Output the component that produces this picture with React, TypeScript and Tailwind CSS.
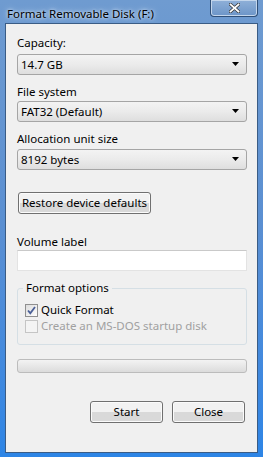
import React from "react";

const font = { fontFamily: '"Noto Sans", "Open Sans", sans-serif' };

function Combo({ value }: { value: string }) {
  return (
    <div className="flex h-[21px] w-[230px] items-center rounded-[3px] border border-[#a5a5a5] bg-gradient-to-b from-[#f3f3f3] via-[#ebebeb] to-[#dedede] pl-[3px] pr-[6px] text-[11.5px] text-black">
      <span className="leading-none">{value}</span>
      <svg className="ml-auto" width="8" height="5" viewBox="0 0 8 5">
        <path d="M0 0h7l-3.5 4z" fill="#000" />
      </svg>
    </div>
  );
}

function Button({ label, className = "" }: { label: string; className?: string }) {
  return (
    <div
      className={`flex h-[22px] items-center justify-center rounded-[3px] border border-[#707070] bg-gradient-to-b from-[#f2f2f2] from-50% to-[#d9d9d9] to-50% text-[11.5px] text-black shadow-[inset_0_0_0_1px_#fbfbfb] ${className}`}
    >
      {label}
    </div>
  );
}

function Check({ checked, disabled, label }: { checked?: boolean; disabled?: boolean; label: string }) {
  return (
    <div className="flex h-[16px] items-center">
      <div
        className={`flex h-[13px] w-[13px] items-center justify-center border ${
          disabled ? "border-[#c5c5c5] bg-[#f4f4f4]" : "border-[#8f8f8f] bg-gradient-to-br from-[#dcdcdc] to-[#fdfdfd]"
        }`}
      >
        {checked && (
          <svg width="9" height="9" viewBox="0 0 9 9">
            <path d="M1 4.5l2.3 2.7L8 1" fill="none" stroke="#4a5f97" strokeWidth="1.8" />
          </svg>
        )}
      </div>
      <span className={`ml-[3px] text-[11.5px] ${disabled ? "text-[#a0a0a0]" : "text-black"}`}>{label}</span>
    </div>
  );
}

export default function App() {
  return (
    <div
      className="flex h-[457px] w-[263px] flex-col overflow-hidden bg-gradient-to-b from-[#6f9bd0] via-[#5a8fd2] to-[#2d85e6]"
      style={font}
    >
      <div className="flex h-[23px] shrink-0 items-start">
        <span className="pl-[7px] pt-[5px] text-[11.5px] text-black [text-shadow:0_0_6px_#dbe7f4,0_0_3px_#dbe7f4]">
          Format Removable Disk (F:)
        </span>
        <div className="ml-auto mr-[5px] flex h-[17px] w-[48px] items-center justify-center rounded-b-[4px] border border-t-0 border-[#2f4f78] bg-gradient-to-b from-[#8fb0d8] to-[#6c95c8] shadow-[inset_0_0_0_1px_#c3d6ec]">
          <svg width="11" height="10" viewBox="0 0 11 10">
            <path d="M1.5 1.5l8 7M9.5 1.5l-8 7" stroke="#333" strokeWidth="3.2" strokeLinecap="square" />
            <path d="M1.5 1.5l8 7M9.5 1.5l-8 7" stroke="#fff" strokeWidth="1.8" strokeLinecap="square" />
          </svg>
        </div>
      </div>

      <div className="mx-[5px] flex h-[430px] flex-col border border-[#3a5c85] bg-[#f0f0f0] pl-[11px] text-[11.5px] text-black">
        <div className="mt-[11px] h-[16px] leading-[16px]">Capacity:</div>
        <div className="mt-[3px]">
          <Combo value="14.7 GB" />
        </div>
        <div className="mt-[9px] h-[16px] leading-[16px]">File system</div>
        <div className="mt-[1px]">
          <Combo value="FAT32 (Default)" />
        </div>
        <div className="mt-[9px] h-[16px] leading-[16px]">Allocation unit size</div>
        <div className="mt-[2px]">
          <Combo value="8192 bytes" />
        </div>
        <Button label="Restore device defaults" className="mt-[22px] ml-[1px] w-[133px]" />
        <div className="mt-[20px] h-[16px] leading-[16px]">Volume label</div>
        <div className="h-[21px] w-[230px] border border-[#e3e3e3] border-t-[#c9c9c9] bg-white" />
        <div className="relative mt-[17px] h-[57px] w-[230px] rounded-[3px] border border-[#d5dfe5] pl-[7px] pt-[13px]">
          <span className="absolute left-[5px] top-[-9px] bg-[#f0f0f0] px-[3px] leading-[16px]">Format options</span>
          <Check checked label="Quick Format" />
          <Check disabled label="Create an MS-DOS startup disk" />
        </div>
        <div className="mt-[14px] h-[14px] w-[230px] rounded-[3px] border border-[#bcbcbc] bg-gradient-to-b from-[#f3f3f3] to-[#dcdcdc]" />
        <div className="mt-[28px] flex w-[228px] justify-end gap-[9px]">
          <Button label="Start" className="w-[73px]" />
          <Button label="Close" className="w-[73px]" />
        </div>
      </div>
    </div>
  );
}
